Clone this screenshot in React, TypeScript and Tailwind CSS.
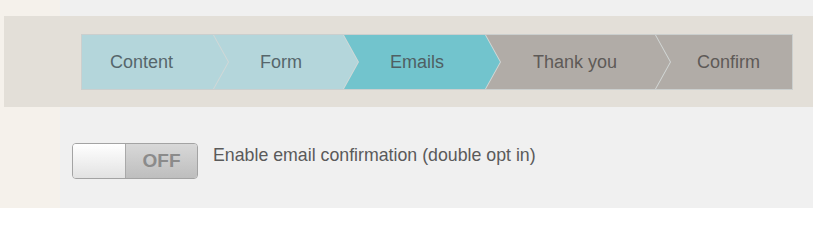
import React from "react";

type Step = {
  label: string;
  width: string;
  pad: string;
  bg: string;
  text: string;
  clip: string;
  first?: boolean;
};

const firstClip = "[clip-path:polygon(0_0,calc(100%-15px)_0,100%_50%,calc(100%-15px)_100%,0_100%)]";
const midClip =
  "[clip-path:polygon(0_0,calc(100%-15px)_0,100%_50%,calc(100%-15px)_100%,0_100%,15px_50%)]";
const lastClip = "[clip-path:polygon(0_0,100%_0,100%_100%,0_100%,15px_50%)]";

const steps: Step[] = [
  { label: "Content", width: "w-[146px]", pad: "pl-[28px]", bg: "bg-[#b4d6db]", text: "text-[#56666b]", clip: firstClip, first: true },
  { label: "Form", width: "w-[144px]", pad: "pl-[46px]", bg: "bg-[#b4d6db]", text: "text-[#56666b]", clip: midClip },
  { label: "Emails", width: "w-[156px]", pad: "pl-[46px]", bg: "bg-[#72c4cd]", text: "text-[#4f5f63]", clip: midClip },
  { label: "Thank you", width: "w-[184px]", pad: "pl-[47px]", bg: "bg-[#b1aca7]", text: "text-[#5e5a57]", clip: midClip },
  { label: "Confirm", width: "w-[136px]", pad: "pl-[41px]", bg: "bg-[#b1aca7]", text: "text-[#5e5a57]", clip: lastClip },
];

export default function App() {
  return (
    <div className="flex h-[208px] w-[813px] overflow-hidden font-['Liberation_Sans',Arial,sans-serif]">
      <div className="w-[60px] shrink-0 bg-[#f5f1eb]" />

      <main className="flex-1 bg-[#f0f0f0] pt-[16px]">
        {/* steps band */}
        <div className="-ml-[56px] h-[91px] bg-[#e3dfd8] pl-[77px] pt-[18px]">
          <div className="flex h-[56px] w-[712px] border border-[#cbcfce] bg-[#d3d8d7]">
            {steps.map((s) => (
              <div
                key={s.label}
                className={`flex h-full shrink-0 items-center ${s.width} ${s.pad} ${s.bg} ${s.text} ${s.clip} ${
                  s.first ? "" : "-ml-[14px]"
                } pt-[1px] text-[18px]`}
              >
                {s.label}
              </div>
            ))}
          </div>
        </div>

        {/* double opt in */}
        <div className="mt-[36px] flex items-start gap-[15px] pl-[12px]">
          <div className="flex h-[36px] w-[126px] overflow-hidden rounded-[4px] border border-[#a3a3a3]">
            <div className="w-[53px] border-r border-[#a9a9a9] bg-gradient-to-b from-[#ffffff] to-[#e2e2e2] shadow-[1px_0_2px_rgba(0,0,0,0.15)]" />
            <div className="flex flex-1 items-center justify-center bg-gradient-to-b from-[#d8d8d8] to-[#bebebe] text-[19px] font-bold text-[#8b8b8b]">
              OFF
            </div>
          </div>
          <span className="mt-[1px] text-[17.75px] leading-[22px] text-[#5a5a5a]">
            Enable email confirmation (double opt in)
          </span>
        </div>
      </main>
    </div>
  );
}
